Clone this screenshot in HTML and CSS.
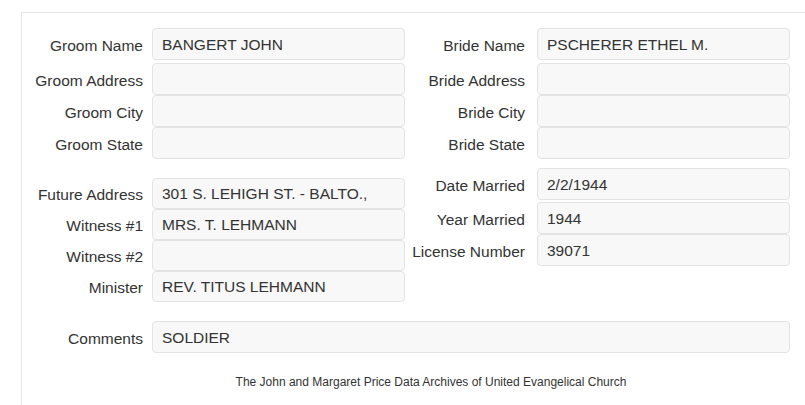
FILE: index.html
```html
<!DOCTYPE html>
<html lang="en">
<head>
    <meta charset="UTF-8">
    <meta name="viewport" content="width=device-width, initial-scale=1.0">
    <title>Marriage Record</title>
    <link rel="stylesheet" href="styles.css">
</head>
<body>
    <div class="panel">
        <!-- Groom / bride -->
        <div class="section">
            <div class="col col-left">
                <div class="row first">
                    <label>Groom Name</label>
                    <div class="field">BANGERT JOHN</div>
                </div>
                <div class="row">
                    <label>Groom Address</label>
                    <div class="field"></div>
                </div>
                <div class="row">
                    <label>Groom City</label>
                    <div class="field"></div>
                </div>
                <div class="row">
                    <label>Groom State</label>
                    <div class="field"></div>
                </div>
            </div>
            <div class="col col-right">
                <div class="row first">
                    <label>Bride Name</label>
                    <div class="field">PSCHERER ETHEL M.</div>
                </div>
                <div class="row">
                    <label>Bride Address</label>
                    <div class="field"></div>
                </div>
                <div class="row">
                    <label>Bride City</label>
                    <div class="field"></div>
                </div>
                <div class="row">
                    <label>Bride State</label>
                    <div class="field"></div>
                </div>
            </div>
        </div>

        <!-- Marriage details -->
        <div class="section details">
            <div class="col col-left lower">
                <div class="row short">
                    <label>Future Address</label>
                    <div class="field">301 S. LEHIGH ST. - BALTO.,</div>
                </div>
                <div class="row short">
                    <label>Witness #1</label>
                    <div class="field">MRS. T. LEHMANN</div>
                </div>
                <div class="row short">
                    <label>Witness #2</label>
                    <div class="field"></div>
                </div>
                <div class="row short">
                    <label>Minister</label>
                    <div class="field">REV. TITUS LEHMANN</div>
                </div>
            </div>
            <div class="col col-right">
                <div class="row first-sm">
                    <label>Date Married</label>
                    <div class="field">2/2/1944</div>
                </div>
                <div class="row">
                    <label>Year Married</label>
                    <div class="field">1944</div>
                </div>
                <div class="row">
                    <label>License Number</label>
                    <div class="field">39071</div>
                </div>
            </div>
        </div>

        <div class="row comments">
            <label>Comments</label>
            <div class="field">SOLDIER</div>
        </div>

        <p class="footer">The John and Margaret Price Data Archives of United Evangelical Church</p>
    </div>
</body>
</html>
```

FILE: styles.css
```css
body {
    margin: 0;
    padding: 0;
    font-family: "Liberation Sans", Arial, sans-serif;
    color: #333;
    background-color: #fff;
    overflow: hidden;
}

.panel {
    margin: 12px 0 0 21px;
    width: 818px;
    padding-top: 15px;
    border-top: 1px solid #e5e5e5;
    border-left: 1px solid #e5e5e5;
}

.section {
    display: flex;
    align-items: flex-start;
}

.details {
    margin-top: 9px;
}

.col {
    display: flex;
    flex-direction: column;
}

.col-left.lower {
    margin-top: 10px;
}

.row {
    display: flex;
    align-items: center;
}

.row.first {
    margin-bottom: 3px;
}

.row.first-sm {
    margin-bottom: 2px;
}

label {
    padding-top: 3px;
    font-size: 15.5px;
    text-align: right;
    white-space: nowrap;
    color: #333;
}

.col-left label,
.comments label {
    width: 121px;
    margin-right: 9px;
}

.col-right label {
    width: 120px;
    margin-right: 12px;
}

.field {
    box-sizing: border-box;
    width: 253px;
    height: 32px;
    padding: 1px 9px 0;
    line-height: 29px;
    font-size: 15.5px;
    color: #333;
    background-color: #f8f8f8;
    border: 1px solid #e3e3e3;
    border-radius: 4px;
}

.row.short .field {
    height: 31px;
    line-height: 28px;
}

.comments {
    margin-top: 19px;
}

.comments .field {
    width: 638px;
}

.footer {
    margin: 22px 0 0 0;
    padding-bottom: 20px;
    font-size: 12px;
    text-align: center;
}
```
